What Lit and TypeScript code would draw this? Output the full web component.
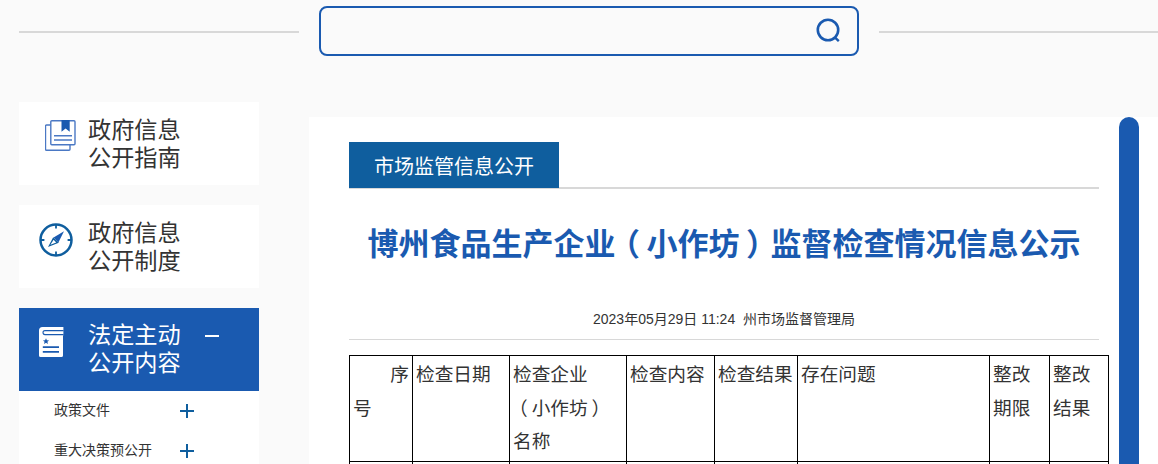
import { LitElement, html, css } from "lit";
import { customElement } from "lit/decorators.js";

const bookmarkIcon = html`<svg width="31" height="31" viewBox="0 0 31 31" fill="none" stroke="#4a78c4" stroke-width="1.4">
  <path d="M5.8 5H1.5a1 1 0 0 0-1 1V29.3a1 1 0 0 0 1 1H24a1 1 0 0 0 1-1v-4.6"/>
  <path d="M6.8.7H29a1 1 0 0 1 1 1v22a1 1 0 0 1-1 1H6.8a1 1 0 0 1-1-1v-22a1 1 0 0 1 1-1z"/>
  <path d="M16.5 0h8.2v11.7l-4.1-3.2-4.1 3.2z" fill="#1a5ab0" stroke="none"/>
  <path d="M9 15.7h18M9 20h18" stroke-width="1.4"/>
</svg>`;

const compassIcon = html`<svg width="34" height="34" viewBox="0 0 34 34" fill="none" stroke="#0f5e9e">
  <circle cx="17" cy="17" r="15.5" stroke-width="2.5"/>
  <path d="M17 2v3.4M17 28.6V32M2 17h3.4M28.6 17H32" stroke-width="1.8"/>
  <path d="M25 8.3 19.4 19.4 14.6 14.6z" fill="#1a5ab0" stroke="none"/>
  <path d="M9 24 14.2 14.2 19.8 19.8zM14.6 16.8 11.4 21.8 17.2 19.4z" fill="#0f5e9e" fill-rule="evenodd" stroke="none"/>
</svg>`;

const lawIcon = html`<svg width="25" height="30" viewBox="0 0 25 30" fill="#fff">
  <path d="M3.5 0H24.4V8.5H24V28.4a1.6 1.6 0 0 1-1.6 1.6H1.6A1.6 1.6 0 0 1 0 28.4V3.5A3.5 3.5 0 0 1 3.5 0z"/>
  <path d="M24.6 3.6H6a2 2 0 0 0 0 4h18.6" fill="none" stroke="#1a5ab0" stroke-width="1.1"/>
  <path d="M7 11.2l.9 2 2.2.2-1.7 1.4.6 2.1L7 15.8l-2 1.1.6-2.1-1.7-1.4 2.2-.2z" fill="#1a5ab0"/>
  <path d="M3.8 19.2H20V21H3.8zM3.8 24H20v1.8H3.8z" fill="#1a5ab0"/>
</svg>`;

const plus = html`<svg class="plus" width="14" height="14" viewBox="0 0 14 14" fill="none" stroke="#0f5e9e" stroke-width="2"><path d="M0 7h14M7 0v14"/></svg>`;

@customElement("app-root")
export class AppRoot extends LitElement {
  static styles = css`
    :host {
      display: block;
      height: 464px;
      overflow: hidden;
      background: #fafafa;
      font-family: "Liberation Sans", "Noto Sans CJK SC", sans-serif;
      color: #333;
    }
    .top {
      display: flex;
      align-items: flex-start;
      padding: 6px 0 0 19px;
      gap: 20px;
    }
    .rule {
      flex: none;
      width: 280px;
      height: 2px;
      margin-top: 25px;
      background: #d8d8d8;
    }
    .rule.last {
      flex: 1;
    }
    .search {
      flex: none;
      box-sizing: border-box;
      width: 540px;
      height: 50px;
      border: 2px solid #1a5ab0;
      border-radius: 8px;
      display: flex;
      align-items: center;
      justify-content: flex-end;
      padding-right: 14px;
    }
    .columns {
      display: flex;
      align-items: flex-start;
      margin-top: 46px;
      padding-left: 19px;
      gap: 50px;
    }
    .side {
      flex: none;
      width: 240px;
      display: flex;
      flex-direction: column;
      gap: 20px;
    }
    .card {
      height: 83px;
      box-sizing: border-box;
      background: #fff;
      display: flex;
      align-items: flex-start;
      padding-top: 14px;
      font-size: 23.2px;
      line-height: 28px;
    }
    .card.on {
      background: #1a5ab0;
      color: #fff;
      padding-top: 13px;
    }
    .ico {
      flex: none;
      box-sizing: border-box;
      width: 69px;
      display: flex;
      padding: 4px 0 0 20px;
    }
    .ico.a {
      padding-left: 26px;
    }
    .card.on .ico {
      padding-top: 6px;
    }
    .minus {
      width: 14px;
      height: 2px;
      background: #fff;
      margin: 14px 0 0 24px;
    }
    .group {
      display: flex;
      flex-direction: column;
    }
    .sub {
      background: #fff;
      display: flex;
      flex-direction: column;
      padding: 0 0 0 35px;
      font-size: 14px;
    }
    .sub div {
      height: 40px;
      display: flex;
      align-items: center;
      justify-content: space-between;
      width: 140px;
    }
    .sub span {
      margin-bottom: 4px;
    }
    .main {
      flex: 1;
      margin-top: 15px;
      background: #fff;
      height: 400px;
      box-sizing: border-box;
      padding: 25px 0 0 40px;
      position: relative;
    }
    .thumb {
      position: absolute;
      left: 810px;
      top: 0;
      width: 20px;
      height: 400px;
      background: #1a5ab0;
      border-radius: 10px 10px 0 0;
    }
    .head {
      width: 750px;
      border-bottom: 2px solid #d8d8d8;
      height: 45px;
    }
    .tab {
      width: 210px;
      height: 46px;
      background: #0f5e9e;
      color: #fff;
      font-size: 20px;
      display: flex;
      align-items: center;
      justify-content: center;
    }
    h1 {
      width: 750px;
      margin: 0;
      padding-top: 37px;
      height: 67px;
      line-height: 38px;
      text-align: center;
      font-size: 31px;
      font-weight: 700;
      color: #1a5ab0;
      white-space: nowrap;
    }
    .pn {
      font-feature-settings: "palt";
      padding: 0 0.25em;
    }
    .meta {
      width: 750px;
      box-sizing: border-box;
      height: 47px;
      padding-top: 18px;
      line-height: 16px;
      font-size: 14px;
      text-align: center;
      border-bottom: 1px solid #d8d8d8;
      white-space: pre;
    }
    table {
      margin-top: 15px;
      width: 759px;
      table-layout: fixed;
      border-collapse: collapse;
      font-size: 18.667px;
      line-height: 33.6px;
    }
    td {
      border: 1px solid #000;
      padding: 2px 3px 0;
      vertical-align: top;
      height: 106px;
      box-sizing: border-box;
    }
    .indent {
      text-indent: 2em;
    }
  `;

  render() {
    const widths = [63, 97, 117, 88, 83, 192, 60, 59];
    return html`
      <div class="top">
        <div class="rule"></div>
        <div class="search">
          <svg width="28" height="28" viewBox="0 0 28 28" fill="none" stroke="#1a5ab0">
            <circle cx="13" cy="13" r="10.2" stroke-width="2.6"/>
            <path d="M19.6 20.2l4.2 4" stroke-width="2.4"/>
          </svg>
        </div>
        <div class="rule last"></div>
      </div>
      <div class="columns">
        <div class="side">
          <div class="card"><div class="ico a">${bookmarkIcon}</div><div>政府信息<br />公开指南</div></div>
          <div class="card"><div class="ico">${compassIcon}</div><div>政府信息<br />公开制度</div></div>
          <div class="group">
            <div class="card on"><div class="ico">${lawIcon}</div><div>法定主动<br />公开内容</div><div class="minus"></div></div>
            <div class="sub">
              <div><span>政策文件</span>${plus}</div>
              <div><span>重大决策预公开</span>${plus}</div>
            </div>
          </div>
        </div>
        <div class="main">
          <div class="thumb"></div>
          <div class="head"><div class="tab">市场监管信息公开</div></div>
          <h1>博州食品生产企业<span class="pn">（</span>小作坊<span class="pn">）</span>监督检查情况信息公示</h1>
          <div class="meta">2023年05月29日 11:24  州市场监督管理局</div>
          <table>
            <colgroup>${widths.map((w) => html`<col style="width:${w}px" />`)}</colgroup>
            <tr>
              <td class="indent">序号</td>
              <td>检查日期</td>
              <td>检查企业<span class="pn">（</span>小作坊<span class="pn">）</span>名称</td>
              <td>检查内容</td>
              <td>检查结果</td>
              <td>存在问题</td>
              <td>整改期限</td>
              <td>整改结果</td>
            </tr>
            <tr>${widths.map(() => html`<td></td>`)}</tr>
          </table>
        </div>
      </div>
    `;
  }
}
